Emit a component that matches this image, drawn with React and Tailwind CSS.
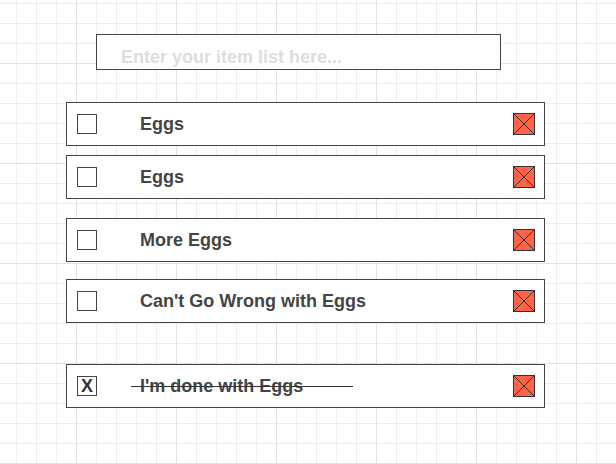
import React from "react";

function DeleteIcon() {
  return (
    <svg width="22" height="22" viewBox="0 0 22 22" className="shrink-0">
      <rect x="0.5" y="0.5" width="21" height="21" fill="#fe6347" stroke="#333333" />
      <line x1="1" y1="1" x2="21" y2="21" stroke="#333333" strokeWidth="1" />
      <line x1="21" y1="1" x2="1" y2="21" stroke="#333333" strokeWidth="1" />
    </svg>
  );
}

function Row({ label, done, className }) {
  return (
    <div
      className={`relative flex h-[44px] w-[479px] items-center border border-[#444444] bg-white pl-[10px] pr-[9px] ${className}`}
    >
      <div className="flex h-[20px] w-[20px] shrink-0 items-center justify-center border border-[#444444] bg-white text-[18px] font-bold leading-none text-[#333333]">
        {done ? "X" : ""}
      </div>
      <div className="ml-[43px] flex-1 pb-[1px] text-[18px] font-bold leading-[18px] text-[#444444]">
        {label}
      </div>
      <DeleteIcon />
      {done && (
        <div className="absolute left-[64px] top-[21px] h-px w-[222px] bg-[#333333]" />
      )}
    </div>
  );
}

export default function App() {
  return (
    <div
      className="h-[464px] w-[616px] overflow-hidden bg-white pt-[34px] [background-image:linear-gradient(to_right,#e2e2e2_1px,transparent_1px),linear-gradient(to_bottom,#e2e2e2_1px,transparent_1px),linear-gradient(to_right,#eeeeee_1px,transparent_1px),linear-gradient(to_bottom,#eeeeee_1px,transparent_1px)] [background-size:100px_100px,100px_100px,20px_20px,20px_20px] [background-position:76px_63px,76px_63px,16px_3px,16px_3px]"
      style={{ fontFamily: '"Liberation Sans", Arial, sans-serif' }}
    >
      <div className="ml-[96px] h-[36px] w-[405px] border border-[#444444] bg-white pl-[24px] pt-[13px] text-[18px] font-bold leading-[18px] text-[#dddddd]">
        Enter your item list here...
      </div>
      <div className="ml-[66px] mt-[32px] flex flex-col">
        <Row label="Eggs" />
        <Row label="Eggs" className="mt-[9px]" />
        <Row label="More Eggs" className="mt-[19px]" />
        <Row label="Can't Go Wrong with Eggs" className="mt-[17px]" />
        <Row label="I'm done with Eggs" done className="mt-[41px]" />
      </div>
    </div>
  );
}
